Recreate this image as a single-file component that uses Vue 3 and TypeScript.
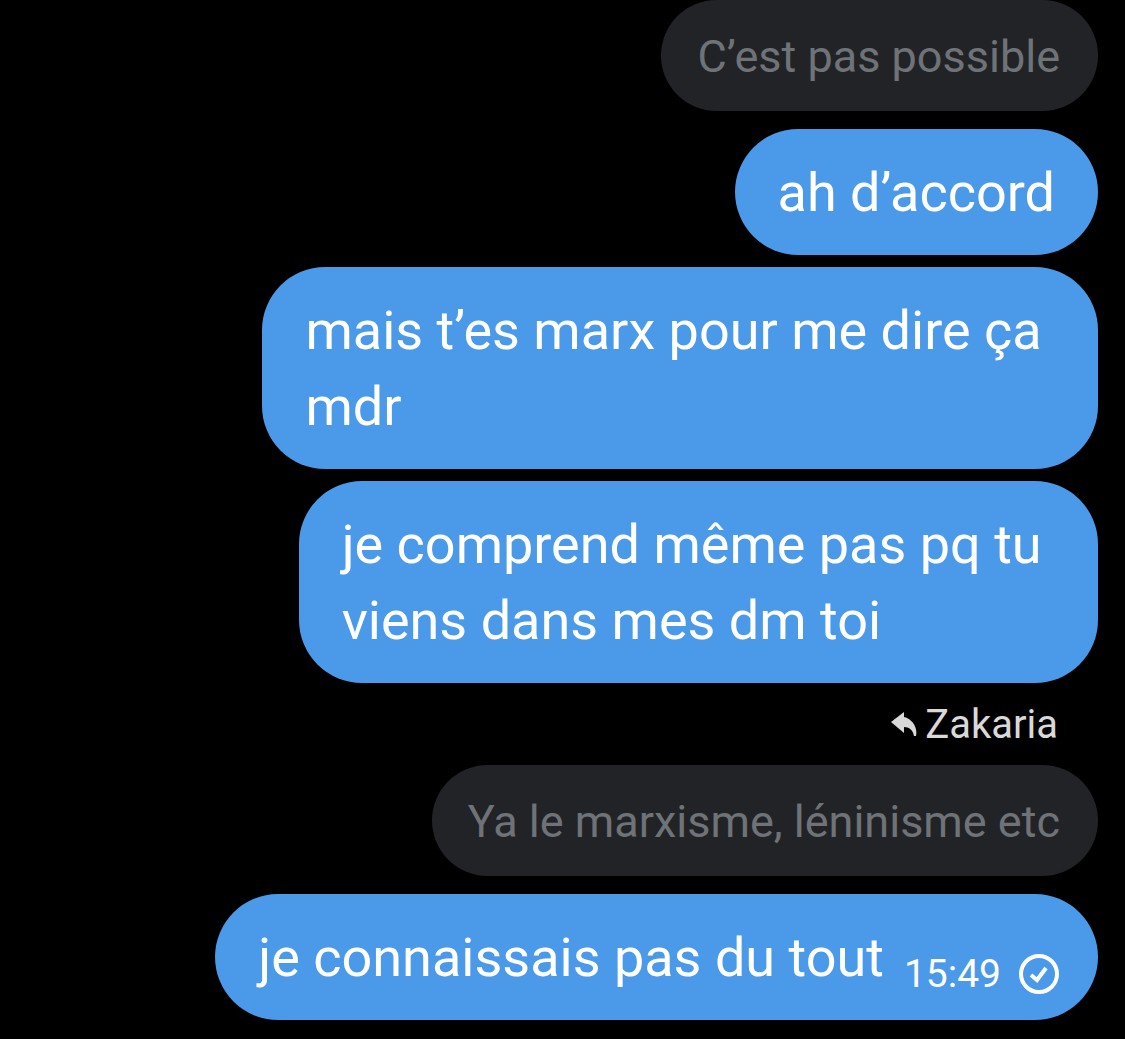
<script setup lang="ts">
interface Message {
  id: number
  kind: 'sent' | 'quote' | 'reply'
  text: string
  time?: string
}

const messages: Message[] = [
  { id: 1, kind: 'quote', text: 'C’est pas possible' },
  { id: 2, kind: 'sent', text: 'ah d’accord' },
  { id: 3, kind: 'sent', text: 'mais t’es marx pour me dire ça \nmdr' },
  { id: 4, kind: 'sent', text: 'je comprend même pas pq tu \nviens dans mes dm toi' },
  { id: 5, kind: 'reply', text: 'Zakaria' },
  { id: 6, kind: 'quote', text: 'Ya le marxisme, léninisme etc' },
  { id: 7, kind: 'sent', text: 'je connaissais pas du tout', time: '15:49' },
]
</script>

<template>
  <main class="chat">
    <div
      v-for="m in messages"
      :key="m.id"
      class="message"
      :class="[m.kind, { timed: m.time }]"
    >
      <svg v-if="m.kind === 'reply'" class="arrow" viewBox="0 0 26 26" aria-hidden="true">
        <path d="M0 10 13 0V5C21 7 27 15 25 24H23C22 18 18 15 13 15V21Z" />
      </svg>
      <span class="text">{{ m.text }}</span>
      <span v-if="m.time" class="meta">
        <time>{{ m.time }}</time>
        <svg class="check" viewBox="0 0 40 40" role="img" aria-label="Envoyé">
          <circle cx="20" cy="20" r="18" />
          <path d="M12 21 18 26 27 14" />
        </svg>
      </span>
    </div>
  </main>
</template>

<style>
body {
  margin: 0;
  background: #000;
}
</style>

<style scoped>
.chat {
  display: flex;
  flex-direction: column;
  align-items: flex-end;
  padding: 0 27px 7px;
  font-family: Roboto, sans-serif;
  color: #fff;
}

.message {
  display: flex;
  box-sizing: border-box;
  max-width: 100%;
  white-space: break-spaces;
}

.sent {
  margin-bottom: 12px;
  padding: 26px 43px 24px;
  border-radius: 63px;
  background: #4b99e9;
  font-size: 54px;
  line-height: 76px;
}

.timed {
  padding-right: 39px;
}

.quote {
  margin-bottom: 18px;
  padding: 26px 38px 23px 36px;
  border-radius: 56px;
  background: #222327;
  color: #6f7377;
  font-size: 45px;
  line-height: 62px;
}

.reply {
  align-items: center;
  gap: 8px;
  margin: 6px 40px 16px;
  color: #d9d9d9;
  font-size: 40px;
  line-height: 48px;
}

.arrow {
  width: 26px;
  height: 26px;
  fill: #d9d9d9;
}

.meta {
  display: flex;
  align-items: center;
  align-self: flex-end;
  gap: 18px;
  margin-left: 20px;
  font-size: 39px;
  line-height: 44px;
}

.check {
  width: 40px;
  height: 40px;
  fill: none;
  stroke: #fff;
  stroke-width: 4;
}
</style>
